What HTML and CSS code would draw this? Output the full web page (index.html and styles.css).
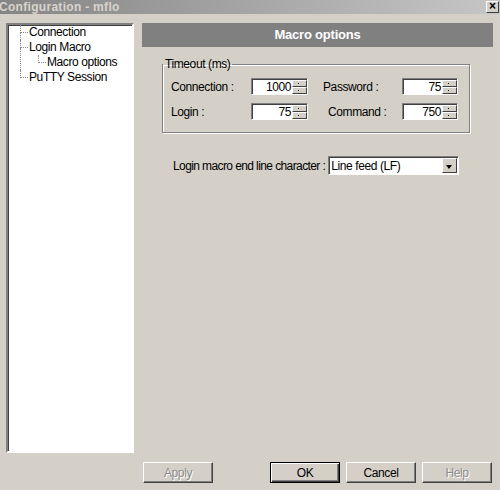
FILE: index.html
```html
<!DOCTYPE html>
<html lang="en">

<head>
  <meta charset="UTF-8" />
  <title>Configuration - mflo</title>
  <link rel="stylesheet" href="styles.css">
</head>

<body>
  <!-- Window caption -->
  <div class="titlebar">
    <span class="title">Configuration - mflo</span>
    <span class="close-btn">×</span>
  </div>

  <div class="main">
    <!-- Settings tree -->
    <div class="tree">
      <ul class="tree-root">
        <li>Connection</li>
        <li>Login Macro
          <ul class="tree-sub">
            <li>Macro options</li>
          </ul>
        </li>
        <li>PuTTY Session</li>
      </ul>
    </div>

    <!-- Page: macro options -->
    <div class="panel">
      <div class="panel-head">Macro options</div>

      <fieldset class="group">
        <legend>Timeout (ms)</legend>
        <div class="grid">
          <span class="lbl">Connection :</span>
          <div class="spin"><span class="spin-val">1000</span><span class="spin-btns"><i class="up"></i><i class="down"></i></span></div>
          <span class="lbl lbl-pw">Password :</span>
          <div class="spin"><span class="spin-val">75</span><span class="spin-btns"><i class="up"></i><i class="down"></i></span></div>

          <span class="lbl">Login :</span>
          <div class="spin"><span class="spin-val">75</span><span class="spin-btns"><i class="up"></i><i class="down"></i></span></div>
          <span class="lbl lbl-cmd">Command :</span>
          <div class="spin"><span class="spin-val">750</span><span class="spin-btns"><i class="up"></i><i class="down"></i></span></div>
        </div>
      </fieldset>

      <div class="endline">
        <span class="lbl lbl-end">Login macro end line character :</span>
        <div class="combo">
          <span class="combo-val">Line feed (LF)</span>
          <span class="combo-btn"><i></i></span>
        </div>
      </div>
    </div>
  </div>

  <div class="footer">
    <button class="btn" disabled>Apply</button>
    <button class="btn btn-default">OK</button>
    <button class="btn">Cancel</button>
    <button class="btn" disabled>Help</button>
  </div>
</body>

</html>
```

FILE: styles.css
```css
:root {
  --face: #d4d0c8;
  --shadow: #808080;
  --dark: #404040;
  --light: #ffffff;
}

html,
body {
  margin: 0;
  width: 500px;
  height: 490px;
  overflow: hidden;
}

body {
  background: var(--face);
  font-family: 'Liberation Sans', Arial, sans-serif;
  font-size: 12px;
  letter-spacing: -0.4px;
  color: #000;
}

/* caption bar */
.titlebar {
  height: 14px;
  display: flex;
  justify-content: space-between;
  align-items: center;
  background: linear-gradient(to right, #858585, #c6c6c6);
}

.title {
  margin-left: -1px;
  font-weight: bold;
  font-size: 12px;
  letter-spacing: 0.3px;
  color: #d8d4cc;
  line-height: 14px;
}

.close-btn {
  width: 13px;
  height: 12px;
  margin-right: 1px;
  box-sizing: border-box;
  background: var(--face);
  border: 1px solid;
  border-color: var(--light) var(--dark) var(--dark) var(--light);
  font-weight: bold;
  font-size: 12px;
  letter-spacing: 0;
  line-height: 9px;
  text-align: center;
}

.main {
  display: flex;
  gap: 8px;
  padding: 9px 7px 0 6px;
}

/* tree view */
.tree {
  width: 128px;
  height: 430px;
  box-sizing: border-box;
  background: #fff;
  border: 2px solid;
  border-color: var(--shadow) var(--light) var(--light) var(--shadow);
  box-shadow: inset 1px 1px 0 var(--dark);
}

.tree ul {
  list-style: none;
  margin: 0;
  padding: 0;
}

.tree-root {
  padding-left: 12px !important;
}

.tree li {
  position: relative;
  padding-left: 9px;
  line-height: 15px;
  white-space: nowrap;
}

.tree li::before {
  content: '';
  position: absolute;
  left: 0;
  top: 0;
  width: 7px;
  height: 7px;
  border-left: 1px dotted #888;
  border-bottom: 1px dotted #888;
}

.tree li:not(:last-child)::after {
  content: '';
  position: absolute;
  left: 0;
  top: 8px;
  bottom: 0;
  border-left: 1px dotted #888;
}

.tree-sub {
  margin-left: 9px !important;
}

/* right-hand page */
.panel {
  width: 351px;
}

.panel-head {
  height: 24px;
  background: var(--shadow);
  color: #fff;
  font-weight: bold;
  font-size: 13px;
  letter-spacing: -0.2px;
  line-height: 24px;
  text-align: center;
}

.group {
  margin: 10px 23px 0 20px;
  padding: 6px 0 12px 8px;
  border: 1px solid var(--shadow);
  box-shadow: inset 1px 1px 0 var(--light), 1px 1px 0 var(--light);
  min-width: 0;
}

.group legend {
  margin-left: -8px;
  padding: 0 2px;
  line-height: 15px;
}

.grid {
  display: grid;
  grid-template-columns: 80px 57px 94px 56px;
  grid-auto-rows: 17px;
  row-gap: 8px;
  align-items: center;
}

.lbl {
  white-space: nowrap;
}

.lbl-pw {
  padding-left: 15px;
}

.lbl-cmd {
  padding-left: 20px;
}

/* up-down edit box */
.spin {
  display: flex;
  height: 17px;
  box-sizing: border-box;
  border: 1px solid;
  border-color: var(--shadow) var(--light) var(--light) var(--shadow);
  box-shadow: inset 1px 1px 0 var(--dark);
  background: #fff;
}

.spin-val {
  flex: 1;
  text-align: right;
  padding: 1px 1px 0 0;
  line-height: 14px;
}

.spin-btns {
  width: 15px;
  display: flex;
  flex-direction: column;
  padding-top: 1px;
}

.spin-btns i {
  flex: 1;
  position: relative;
  background: var(--face);
  border: 1px solid;
  border-color: var(--light) var(--dark) var(--dark) var(--light);
}

.spin-btns i::after {
  content: '';
  position: absolute;
  left: 5px;
  top: 2px;
  width: 1px;
  height: 1px;
  background: #000;
}

/* drop-down list */
.endline {
  display: flex;
  align-items: center;
  gap: 3px;
  margin: 23px 0 0 31px;
}

.lbl-end {
  flex-shrink: 0;
  letter-spacing: -0.6px;
}

.combo {
  display: flex;
  flex-shrink: 0;
  width: 131px;
  height: 19px;
  box-sizing: border-box;
  border: 1px solid;
  border-color: var(--shadow) var(--light) var(--light) var(--shadow);
  box-shadow: inset 1px 1px 0 var(--dark);
  background: #fff;
}

.combo-val {
  flex: 1;
  padding: 2px 0 0 2px;
  line-height: 14px;
}

.combo-btn {
  width: 15px;
  margin: 1px 1px 1px 0;
  box-sizing: border-box;
  position: relative;
  background: var(--face);
  border: 1px solid;
  border-color: var(--light) var(--dark) var(--dark) var(--light);
}

.combo-btn i {
  position: absolute;
  left: 3px;
  top: 6px;
  border-left: 3.5px solid transparent;
  border-right: 3.5px solid transparent;
  border-top: 4px solid #000;
}

/* dialog buttons */
.footer {
  display: flex;
  gap: 6px;
  margin-top: 9px;
  padding-left: 143px;
}

.btn {
  width: 70px;
  height: 21px;
  padding: 0;
  background: var(--face);
  font-family: inherit;
  font-size: 12px;
  letter-spacing: -0.4px;
  color: #000;
  border: 1px solid;
  border-color: var(--light) var(--dark) var(--dark) var(--light);
  box-shadow: inset -1px -1px 0 var(--shadow);
}

.btn:first-child {
  margin-right: 51px;
}

.btn:disabled {
  color: #8c8c8c;
  text-shadow: 1px 1px 0 #fff;
}

.btn-default {
  border: 1px solid #000;
  box-shadow: inset 1px 1px 0 var(--light), inset -1px -1px 0 var(--dark), inset -2px -2px 0 var(--shadow);
}
```
